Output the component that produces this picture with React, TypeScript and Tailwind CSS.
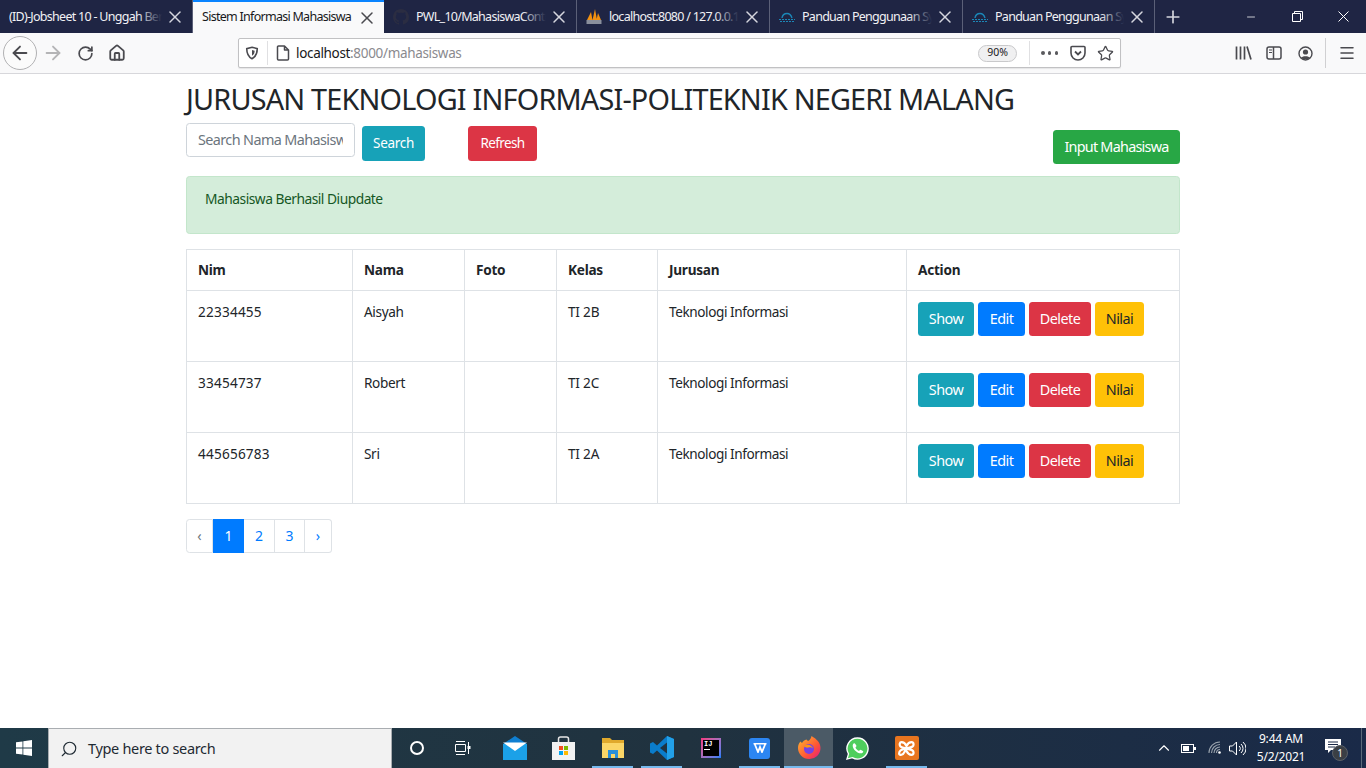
import type { ReactNode } from 'react'
import { ArrowLeft, ArrowRight, RotateCw, Home, ChevronUp, X, Plus, Minus, Star, Menu, Search } from 'lucide-react'

const TABS = [
  { title: '(ID)-Jobsheet 10 - Unggah Berkas', icon: null, width: 'w-[193px]' },
  { title: 'Sistem Informasi Mahasiswa', icon: null, width: 'w-[191px]', active: true },
  { title: 'PWL_10/MahasiswaController.php', icon: 'github', width: 'w-[193px]' },
  { title: 'localhost:8080 / 127.0.0.1', icon: 'pma', width: 'w-[193px]' },
  { title: 'Panduan Penggunaan Syarat', icon: 'cloud', width: 'w-[193px]' },
  { title: 'Panduan Penggunaan Syarat', icon: 'cloud', width: 'w-[192px]' },
]

const ROWS = [
  { nim: '22334455', nama: 'Aisyah', kelas: 'TI 2B' },
  { nim: '33454737', nama: 'Robert', kelas: 'TI 2C' },
  { nim: '445656783', nama: 'Sri', kelas: 'TI 2A' },
]

function TabIcon({ kind }: { kind: string | null }) {
  if (kind === 'github') {
    return (
      <svg className="w-4 h-4 shrink-0" viewBox="0 0 16 16" fill="#2b2d42">
        <path d="M8 0C3.6 0 0 3.6 0 8c0 3.5 2.3 6.5 5.5 7.6.4.1.5-.2.5-.4v-1.4c-2.2.5-2.7-1-2.7-1-.4-.9-.9-1.200-.9-1.200-.7-.5.1-.5.1-.5.8.1 1.200.8 1.200.8.7 1.200 1.900.9 2.300.7.1-.5.3-.9.5-1.100-1.800-.2-3.600-.9-3.600-4 0-.9.3-1.600.8-2.100-.1-.2-.4-1 .1-2.100 0 0 .7-.2 2.200.8a7.500 7.500 0 0 1 4 0c1.500-1 2.200-.8 2.200-.8.4 1.100.2 1.900.1 2.100.5.6.8 1.300.8 2.100 0 3.100-1.900 3.700-3.700 3.900.3.300.6.800.6 1.500v2.200c0 .2.100.5.600.4A8 8 0 0 0 16 8c0-4.400-3.600-8-8-8z" />
      </svg>
    )
  }
  if (kind === 'pma') {
    return (
      <svg className="w-4 h-4 shrink-0" viewBox="0 0 16 16">
        <path d="M1 11 5 3l1.500 8zM6.500 11 9 0l2 11zM10.500 11 12 4l3 7z" fill="#f29111" />
        <rect x="0.500" y="11" width="15" height="4" fill="#8a8f9c" />
      </svg>
    )
  }
  if (kind === 'cloud') {
    return (
      <svg className="w-4 h-4 shrink-0" viewBox="0 0 16 16" fill="none" stroke="#1b87b8" strokeWidth="1.400">
        <path d="M3 9C3.500 6 6 4.500 8 4.500s4 1.200 5 4.500" />
        <path d="M0 10.500h16M1 12.500h14" strokeWidth="1.200" strokeDasharray="2 1" />
      </svg>
    )
  }
  return null
}

function ActionBtn({ label, className }: { label: string; className: string }) {
  return <button className={`h-[34px] pt-px rounded-[3.5px] text-[14.4px] tracking-[-0.55px] ${className}`}>{label}</button>
}

function Slot({ children, active, open }: { children: ReactNode; active?: boolean; open?: boolean }) {
  return (
    <div className={`relative w-[49px] h-10 flex items-center justify-center ${active ? 'bg-[#4b5a66]' : ''}`}>
      {children}
      {open && <div className="absolute bottom-0 inset-x-[4px] h-[2px] bg-[#76b9ed]" />}
      {active && <div className="absolute bottom-0 inset-x-0 h-[2px] bg-[#76b9ed]" />}
    </div>
  )
}

export default function App() {
  return (
    <div className="h-screen w-[1366px] flex flex-col overflow-hidden bg-white font-['Noto_Sans',sans-serif] text-[#212529]">
      {/* tab strip */}
      <div className="h-[33px] shrink-0 bg-[#1f2544] flex text-[12.5px]">
        {TABS.map((t) => (
          <div
            key={t.title + t.width}
            className={`${t.width} relative flex items-center pl-[9px] pr-[7px] gap-[7px] ${t.active ? 'bg-[#f9f9fa] text-[#18181a] border-t-2 border-[#0a84ff]' : 'pt-px text-[#f1f1f4] border-r border-[#5b6078]'}`}
          >
            <TabIcon kind={t.icon} />
            <span className="flex-1 min-w-0 whitespace-nowrap overflow-hidden relative tracking-[-0.72px] -mr-[4px]">
              {t.title}
              {!t.active && <span className="absolute right-0 inset-y-0 w-6 bg-linear-to-r from-transparent to-[#1f2544]" />}
            </span>
            <X className={`w-5 h-5 shrink-0 ${t.active ? 'text-[#4a4a4f]' : 'text-[#d5d6de]'}`} strokeWidth={1.800} />
          </div>
        ))}
        <div className="w-[35px] flex items-center justify-center">
          <Plus className="w-[20px] h-[20px] text-[#d5d6de]" strokeWidth={2} />
        </div>
        <div className="ml-auto flex text-white">
          <div className="w-[46px] flex items-center justify-center"><Minus className="w-[12px] h-[12px]" strokeWidth={1.500} /></div>
          <div className="w-[46px] flex items-center justify-center">
            <svg className="w-[11px] h-[11px]" viewBox="0 0 11 11" fill="none" stroke="white"><path d="M.5 2.500h8v8h-8zM2.500 2.500v-2h8v8h-2" /></svg>
          </div>
          <div className="w-[46px] flex items-center justify-center">
            <svg className="w-[11px] h-[11px]" viewBox="0 0 11 11" stroke="white"><path d="M.5.5l10 10M10.500.5l-10 10" /></svg>
          </div>
        </div>
      </div>

      {/* toolbar */}
      <div className="h-[41px] shrink-0 bg-[#f9f9fa] border-b border-[#d7d7db] flex items-center text-[#4a4a4f] pl-[3px]">
        <div className="w-[34px] h-[34px] rounded-full border border-[#b1b1b3] bg-[#fbfbfb] flex items-center justify-center">
          <ArrowLeft className="w-[22px] h-[22px]" strokeWidth={2} />
        </div>
        <div className="w-[32px] flex justify-center"><ArrowRight className="w-[22px] h-[22px] text-[#b4b4b6]" strokeWidth={2} /></div>
        <div className="w-[32px] flex justify-center"><RotateCw className="w-[17px] h-[17px]" strokeWidth={2.400} /></div>
        <div className="w-[32px] flex justify-center"><Home className="w-[18px] h-[18px]" strokeWidth={2.400} /></div>
        <div className="ml-[105px] w-[883px] h-[30px] bg-white border border-[#c1c1c3] rounded-[2px] flex items-center pl-[6px] shadow-[0_1px_1px_rgba(0,0,0,0.08)]">
          <svg className="w-[14px] h-[14px]" viewBox="0 0 16 16" fill="none" stroke="#4a4a4f" strokeWidth="1.800">
            <path d="M8 1.500l6 1.500c0 5-1.500 9-6 11.500C3.500 12 2 8 2 3z" />
            <path d="M8 4.500l3 .8c0 2.500-.8 4.500-3 5.700z" fill="#4a4a4f" stroke="none" />
          </svg>
          <div className="w-px h-[24px] bg-[#e0e0e2] ml-[8px]" />
          <svg className="w-[14px] h-4 ml-[8px]" viewBox="0 0 14 16" fill="none" stroke="#4a4a4f" strokeWidth="1.500">
            <path d="M2.500 1h6l4 4v9a1 1 0 0 1-1 1h-9a1 1 0 0 1-1-1V2a1 1 0 0 1 1-1zM8.500 1v4h4" strokeLinejoin="round" />
          </svg>
          <span className="ml-[6px] text-[13.5px] tracking-[-0.33px] text-[#18181a]">localhost<span className="text-[#8a8a8e]">:8000/mahasiswas</span></span>
          <div className="ml-auto mr-[12px] w-[39px] h-[17px] rounded-full border border-[#c9c9cb] bg-[#f0f0f1] flex items-center justify-center text-[10.5px] text-[#18181a]">90%</div>
          <div className="w-px h-[24px] bg-[#e0e0e2]" />
          <div className="ml-[11px] w-[17px] flex items-center justify-between">
            <span className="w-[3.500px] h-[3.500px] rounded-full bg-[#5a5a5e]" />
            <span className="w-[3.500px] h-[3.500px] rounded-full bg-[#5a5a5e]" />
            <span className="w-[3.500px] h-[3.500px] rounded-full bg-[#5a5a5e]" />
          </div>
          <svg className="w-4 h-4 ml-[12px]" viewBox="0 0 16 16" fill="none" stroke="#4a4a4f" strokeWidth="1.600">
            <path d="M2 1.500h12a1 1 0 0 1 1 1V8a7 7 0 0 1-14 0V2.500a1 1 0 0 1 1-1z" />
            <path d="M5 6.500l3 3 3-3" strokeWidth="1.800" />
          </svg>
          <Star className="w-[17px] h-[17px] ml-[11px] mr-[6px]" strokeWidth={1.800} />
        </div>
        <div className="ml-[114px] w-[18px] flex items-center">
          <svg className="w-[17px] h-[16px]" viewBox="0 0 17 16" stroke="#4a4a4f" strokeWidth="1.700" fill="none"><path d="M1.500 1.500v13M5.500 1.500v13M9.500 1.500v13M12 1.500l4 13" /></svg>
        </div>
        <div className="ml-[13px]">
          <svg className="w-4 h-[14px] block" viewBox="0 0 16 14" fill="none" stroke="#4a4a4f" strokeWidth="1.500"><rect x="1" y="1" width="14" height="12" rx="2" /><path d="M7.500 1v12" /><path d="M3 4h3M3 6.500h3" strokeWidth="1.200" /></svg>
        </div>
        <div className="ml-[16px]">
          <svg className="w-[15px] h-[15px] block" viewBox="0 0 15 15"><circle cx="7.500" cy="7.500" r="6.500" fill="none" stroke="#4a4a4f" strokeWidth="1.400" /><circle cx="7.500" cy="6" r="2.600" fill="#4a4a4f" /><path d="M3 12c1-2.500 8-2.500 9 0-2 1.800-7 1.800-9 0z" fill="#4a4a4f" /></svg>
        </div>
        <div className="ml-[12px] w-px h-[30px] bg-[#d0d0d2]" />
        <Menu className="w-[18px] h-[18px] ml-[12px]" strokeWidth={2} />
      </div>

      {/* page */}
      <div className="flex-1 min-h-0 text-[14.4px]">
        <div className="w-[994px] ml-[186px] pt-[8px]">
          <h2 className="text-[28.8px] leading-[34.6px] tracking-[-0.8px] font-normal whitespace-nowrap">JURUSAN TEKNOLOGI INFORMASI-POLITEKNIK NEGERI MALANG</h2>
          <div className="flex items-start mt-[6px] h-[53px]">
            <div className="w-[169px] h-[34px] border border-[#ced4da] rounded-[3.500px] bg-white px-[11px] flex items-center text-[#6c757d] whitespace-nowrap tracking-[-0.6px]">
              <span className="overflow-hidden">Search Nama Mahasiswa</span>
            </div>
            <button className="ml-[7px] mt-[3px] h-[35px] w-[63px] pt-px rounded-[3.500px] bg-[#17a2b8] text-white text-[13.5px] tracking-[-0.3px]">Search</button>
            <button className="ml-[43px] mt-[3px] h-[35px] w-[69px] pt-px rounded-[3.500px] bg-[#dc3545] text-white text-[13.5px] tracking-[-0.6px]">Refresh</button>
            <button className="ml-auto mt-[7px] h-[34px] w-[127px] rounded-[3.500px] bg-[#28a745] text-white tracking-[-0.75px]">Input Mahasiswa</button>
          </div>
          <div className="h-[58px] border border-[#c3e6cb] rounded-[3.500px] bg-[#d4edda] text-[#155724] px-[18px] py-[11px] text-[13.8px] leading-[21.600px] tracking-[-0.5px]">
            Mahasiswa Berhasil Diupdate
          </div>
          <table className="mt-[15px] w-[993px] table-fixed border-collapse text-[13.6px]">
            <colgroup>
              <col className="w-[166px]" />
              <col className="w-[112px]" />
              <col className="w-[92px]" />
              <col className="w-[101px]" />
              <col className="w-[249px]" />
              <col className="w-[273px]" />
            </colgroup>
            <thead>
              <tr className="h-[41px]">
                {['Nim', 'Nama', 'Foto', 'Kelas', 'Jurusan', 'Action'].map((h) => (
                  <th key={h} className="border border-[#dee2e6] px-[11px] pt-[2px] text-left font-bold tracking-[-0.25px]">{h}</th>
                ))}
              </tr>
            </thead>
            <tbody>
              {ROWS.map((r) => (
                <tr key={r.nim} className="h-[71px]">
                  <td className="border border-[#dee2e6] px-[11px] pt-[11px] align-top tracking-[0.2px]">{r.nim}</td>
                  <td className="border border-[#dee2e6] px-[11px] pt-[11px] align-top tracking-[-0.35px]">{r.nama}</td>
                  <td className="border border-[#dee2e6] px-[11px] pt-[11px] align-top"></td>
                  <td className="border border-[#dee2e6] px-[11px] pt-[11px] align-top tracking-[-0.2px]">{r.kelas}</td>
                  <td className="border border-[#dee2e6] px-[11px] pt-[11px] align-top tracking-[-0.42px]">Teknologi Informasi</td>
                  <td className="border border-[#dee2e6] px-[11px] pt-[11px] align-top">
                    <div className="flex gap-[4px]">
                      <ActionBtn label="Show" className="bg-[#17a2b8] text-white w-[56px]" />
                      <ActionBtn label="Edit" className="bg-[#007bff] text-white w-[47px]" />
                      <ActionBtn label="Delete" className="bg-[#dc3545] text-white w-[62px]" />
                      <ActionBtn label="Nilai" className="bg-[#ffc107] text-[#212529] w-[49px]" />
                    </div>
                  </td>
                </tr>
              ))}
            </tbody>
          </table>
          <div className="mt-[15px] flex h-[34px] w-[146px] text-[#007bff] text-[14px]">
            <div className="w-[27px] border border-[#dee2e6] rounded-l-[3.500px] flex items-center justify-center text-[#6c757d]">‹</div>
            <div className="w-[31px] bg-[#007bff] text-white flex items-center justify-center">1</div>
            <div className="w-[31px] border-y border-r border-[#dee2e6] flex items-center justify-center">2</div>
            <div className="w-[30px] border-y border-r border-[#dee2e6] flex items-center justify-center">3</div>
            <div className="w-[27px] border-y border-r border-[#dee2e6] rounded-r-[3.500px] flex items-center justify-center">›</div>
          </div>
        </div>
      </div>

      {/* taskbar */}
      <div className="h-10 shrink-0 flex bg-linear-to-r from-[#1f3a47] via-[#20323f] to-[#1a2a48] text-white">
        <div className="w-12 flex items-center justify-center">
          <svg className="w-4 h-4" viewBox="0 0 16 16" fill="white"><path d="M0 2.300l6.500-.9v6.200H0zM7.300 1.300L16 0v7.600H7.300zM0 8.400h6.500v6.200L0 13.700zM7.300 8.400H16V16l-8.700-1.300z" /></svg>
        </div>
        <div className="w-[344px] bg-[#f2f2f2] border-t border-x border-[#a9adb1] flex items-center pl-[11px] text-[#1f2a33] text-[14.500px]">
          <Search className="w-[18px] h-[18px] -scale-x-100" strokeWidth={1.500} />
          <span className="ml-[10px] tracking-[-0.32px]">Type here to search</span>
        </div>
        <div className="flex">
          <Slot>
            <div className="w-[14px] h-[14px] rounded-full border-2 border-white" />
          </Slot>
          <Slot>
            <svg className="w-[17px] h-[15px] -ml-[4px]" viewBox="0 0 17 15" fill="none" stroke="white"><path d="M.5 3.500h10v7H.5zM1 .5h9M1 13.500h9M13.500 1v12" /><rect x="12.500" y="5" width="3" height="3" fill="white" stroke="none" /></svg>
          </Slot>
          <Slot>
            <svg className="w-[24px] h-[24px]" viewBox="0 0 24 24">
              <path d="M0 8 12 0l12 8v16H0z" fill="#0f7fd1" />
              <path d="M0 8h24v16H0z" fill="#1ba1e8" />
              <path d="M0 6.500h24L12 15z" fill="white" />
            </svg>
          </Slot>
          <Slot>
            <svg className="w-[23px] h-[24px]" viewBox="0 0 23 24">
              <path d="M6.500 7V3a2 2 0 0 1 2-2h6a2 2 0 0 1 2 2v4" fill="none" stroke="#e6e6e6" strokeWidth="1.500" />
              <path d="M0 6h23v18H0z" fill="#f2f2f2" />
              <path d="M7 10h4v4H7z" fill="#f25022" /><path d="M12 10h4v4h-4z" fill="#7fba00" /><path d="M7 15h4v4H7z" fill="#00a4ef" /><path d="M12 15h4v4h-4z" fill="#ffb900" />
            </svg>
          </Slot>
          <Slot open>
            <svg className="w-[22px] h-[20px]" viewBox="0 0 22 20">
              <path d="M0 0h8l2 2h12v18H0z" fill="#e0a92c" />
              <path d="M0 5h22v15H0z" fill="#fbd667" />
              <path d="M6 12h10v8h-3v-4H9v4H6z" fill="#2a8fd8" />
            </svg>
          </Slot>
          <Slot open>
            <svg className="w-[24px] h-[24px]" viewBox="0 0 24 24">
              <path d="M17 0l7 3v18l-7 3L7 14.500l-4 3.500-3-1.500V7.500L3 6l4 3.500z" fill="#0a7ccb" />
              <path d="M17 0l7 3v18l-7 3z" fill="#22a0e8" />
              <path d="M17 6.500v11L10 12z" fill="#1f3342" />
            </svg>
          </Slot>
          <Slot>
            <div className="w-5 h-5 bg-linear-to-br from-[#f5317f] to-[#087cfa] p-[2px]">
              <div className="w-full h-full bg-black flex flex-col px-[1.500px] font-['Liberation_Mono',monospace] text-[7px] leading-[8px] font-bold text-white">
                <span>IJ</span>
                <span className="mt-[1px] w-[6px] h-px bg-white" />
              </div>
            </div>
          </Slot>
          <Slot open>
            <div className="w-[21px] h-[21px] rounded-[3px] bg-[#2c86f2] flex items-center justify-center">
              <svg className="w-[14px] h-[10px]" viewBox="0 0 14 10" fill="none" stroke="white" strokeWidth="1.800"><path d="M.5.500h13M1.500.500L5 9l2-5 2 5L12.500.500" /></svg>
            </div>
          </Slot>
          <Slot active>
            <svg className="w-[24px] h-[24px]" viewBox="0 0 24 24">
              <defs>
                <linearGradient id="ffx" x1="0" y1="0" x2="1" y2="1"><stop offset="0" stopColor="#ffbd2e" /><stop offset="0.600" stopColor="#ff5634" /><stop offset="1" stopColor="#e31587" /></linearGradient>
              </defs>
              <path d="M12 23A11 11 0 0 1 1 12c0-3 1-5 2.500-6.500L5 7c1-2 2.500-3 4.500-3.500L11 5c2-1 3-2.500 3.500-5 5 3 9 6.500 9 12A11 11 0 0 1 12 23z" fill="url(#ffx)" />
              <circle cx="12" cy="13" r="5" fill="#7542e5" />
              <path d="M7 10c2-1.500 4-1.500 5.500-1 2 .7 3 2 3.500 3.500-1-1-3-1.500-4.500-1-1.500.3-3 .3-4.500-1.500z" fill="#ff980e" />
            </svg>
          </Slot>
          <Slot>
            <svg className="w-[23px] h-[23px]" viewBox="0 0 24 24">
              <path d="M12 1a11 11 0 0 0-9.400 16.700L1 23l5.500-1.500A11 11 0 1 0 12 1z" fill="#4fce5d" stroke="white" strokeWidth="1.400" />
              <path d="M8.500 6.500c-.7 0-1.500 1-1.500 2.500 0 3.500 4.500 8 8.500 8 1.500 0 2.500-1 2.500-2 0-.5-2.500-1.800-3-1.800-.5 0-1 1.200-1.500 1.200-1 0-3.500-2.500-3.500-3.500 0-.5 1-1 1-1.500S9.500 6.500 8.500 6.500z" fill="white" />
            </svg>
          </Slot>
          <Slot open>
            <div className="w-6 h-6 rounded-[2px] bg-[#e8751f] flex items-center justify-center">
              <svg className="w-[17px] h-[15px]" viewBox="0 0 17 15" fill="none" stroke="white" strokeWidth="2.200"><path d="M8.500 5C7 2 5.500 1.200 3.500 1.200S1.200 4 2.500 5.500 6 6.500 8.500 7.500 13 8.500 14.500 9.500 16 13.800 13.500 13.800 10 13 8.500 10 7 13 3.500 13.800 1 11 2.500 9.500 6 8.500 8.500 7.500 13 6.500 14.500 5.500 16 1.200 13.500 1.200 10 2 8.500 5z" /></svg>
            </div>
          </Slot>
        </div>
        <div className="ml-auto flex items-center">
          <ChevronUp className="w-[18px] h-[18px]" strokeWidth={1.500} />
          <svg className="w-[15px] h-[9px] ml-[8px]" viewBox="0 0 15 9" fill="none" stroke="white"><rect x=".5" y=".5" width="12" height="8" /><rect x="2" y="2" width="6" height="5" fill="white" stroke="none" /><rect x="13" y="3" width="2" height="3" fill="white" stroke="none" /></svg>
          <svg className="w-[14px] h-[14px] ml-[12px]" viewBox="0 0 14 14" fill="none" stroke="#9aa3ad" strokeWidth="1.100"><path d="M1 12a11 11 0 0 1 11-11M3.500 12A8.500 8.500 0 0 1 12 3.500M6 12a6 6 0 0 1 6-6M8.500 12A3.500 3.500 0 0 1 12 8.500" /><circle cx="11.500" cy="11.500" r="1.300" fill="white" stroke="none" /></svg>
          <svg className="w-[17px] h-[15px] ml-[7px]" viewBox="0 0 17 15" fill="none" stroke="white"><path d="M.5 5h3l4-4v13l-4-4h-3zM10 5a3 3 0 0 1 0 5M12 3a6 6 0 0 1 0 9M14 1a8.500 8.500 0 0 1 0 13" /></svg>
          <div className="w-[70px] text-[12px] leading-[18px] text-center whitespace-nowrap tracking-[-0.2px]">
            <div>9:44 AM</div>
            <div>5/2/2021</div>
          </div>
          <div className="relative w-[18px] h-[16px] ml-[9px] mb-[3px]">
            <svg className="w-[16px] h-[15px]" viewBox="0 0 16 15" fill="white"><path d="M0 0h16v11H6l-3 3v-3H0z" /><path d="M3 3h10M3 5.500h10M3 8h7" stroke="#1a2a48" /></svg>
            <div className="absolute left-[7px] top-[6px] w-[16px] h-[16px] rounded-full bg-[#3a3f45] border border-[#5a6068] flex items-center justify-center text-[10px] leading-none">1</div>
          </div>
          <div className="ml-[18px] w-[5px] h-10 border-l border-[#5a6a7a]" />
        </div>
      </div>
    </div>
  )
}
